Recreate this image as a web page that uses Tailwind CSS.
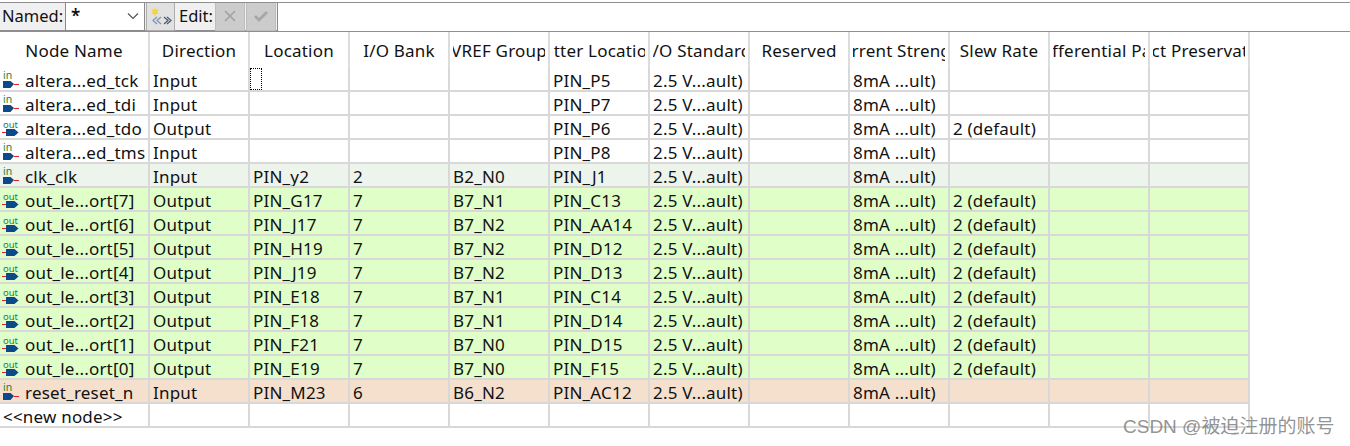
<!DOCTYPE html>
<html lang="en">
<head>
    <meta charset="UTF-8">
    <title>Pin Planner</title>
    <script src="https://cdn.jsdelivr.net/npm/@tailwindcss/browser@4"></script>
</head>
<body class="bg-white h-[446px] w-[1350px] overflow-hidden relative font-['Noto_Sans',sans-serif] text-[17px] tracking-[0.2px] text-[#111]">
    <!-- toolbar -->
    <div class="h-[32px] bg-[#f0f0f0] border-t-[2px] border-t-[#fff] border-b-[2px] border-b-[#8e8e93] flex items-center relative">
        <div class="absolute left-0 right-0 top-0 h-[1px] bg-[#8e8e93]"></div>
        <span class="ml-[2px] w-[63px] tracking-normal text-[16.5px]">Named:</span>
        <div class="w-[80px] h-[29px] bg-white border border-[#8a8a8a] flex items-center justify-between pl-[5px] pr-[5px]">
            <span class="font-semibold">*</span>
            <svg width="12" height="8" viewBox="0 0 12 8"><path d="M1 1.5 L6 6.5 L11 1.5" fill="none" stroke="#555" stroke-width="1.2"/></svg>
        </div>
        <div class="ml-[1px] w-[29px] h-[29px] bg-[#e1e1e1] border border-[#adadad] flex items-center justify-center">
            <svg width="22" height="20" viewBox="0 0 22 20">
                <path d="M5 1 L6 4 L9 3 L7 6 L9 8 L6 8 L5 11 L4 8 L1 8 L3 6 L1 3 L4 4 Z" fill="#f5d33c"/>
                <path d="M7 11 L3 14.5 L7 18 M11 11 L7 14.5 L11 18" fill="none" stroke="#7a93b5" stroke-width="1.2"/>
                <path d="M14 11 L18 14.5 L14 18 M17 11 L21 14.5 L17 18" fill="none" stroke="#4a5a70" stroke-width="1.2"/>
            </svg>
        </div>
        <span class="ml-[4px] w-[36px] tracking-normal text-[16.5px]">Edit:</span>
        <div class="w-[30px] h-[29px] bg-[#cccccc] border border-[#bdbdbd] flex items-center justify-center">
            <svg width="14" height="14" viewBox="0 0 14 14"><path d="M2 2 L12 12 M12 2 L2 12" stroke="#a0a0a0" stroke-width="1.5"/></svg>
        </div>
        <div class="ml-[1px] w-[30px] h-[29px] bg-[#cccccc] border border-[#bdbdbd] flex items-center justify-center">
            <svg width="16" height="14" viewBox="0 0 16 14"><path d="M2 7 L6 11 L14 3" fill="none" stroke="#a8a8a8" stroke-width="3"/></svg>
        </div>
        <div class="ml-[1px] flex-1 h-[29px] bg-white border-l border-[#8a8a8a]"></div>
    </div>

    <!-- table -->
    <div id="table" class="w-[1250px]"></div>

    <!-- watermark -->
    <div class="absolute left-[1123px] top-[415px] text-[19px] tracking-normal leading-[24px] text-[#777]/80 whitespace-nowrap font-['Liberation_Sans','Noto_Sans_CJK_SC',sans-serif]">CSDN @被迫注册的账号</div>

    <script>
        const headers = ['Node Name', 'Direction', 'Location', 'I/O Bank', 'VREF Group', 'Fitter Location', 'I/O Standard', 'Reserved', 'Current Strength', 'Slew Rate', 'Differential Pair', 'Strict Preservation'];
        const S = '2.5 V...ault)', C = '8mA ...ult)', D = '2 (default)';
        const rows = [
            ['in', 'altera...ed_tck', 'Input', '', '', '', 'PIN_P5', S, '', C, '', '', '', ''],
            ['in', 'altera...ed_tdi', 'Input', '', '', '', 'PIN_P7', S, '', C, '', '', '', ''],
            ['out', 'altera...ed_tdo', 'Output', '', '', '', 'PIN_P6', S, '', C, D, '', '', ''],
            ['in', 'altera...ed_tms', 'Input', '', '', '', 'PIN_P8', S, '', C, '', '', '', ''],
            ['in', 'clk_clk', 'Input', 'PIN_y2', '2', 'B2_N0', 'PIN_J1', S, '', C, '', '', '', 'clk'],
            ['out', 'out_le...ort[7]', 'Output', 'PIN_G17', '7', 'B7_N1', 'PIN_C13', S, '', C, D, '', '', 'out'],
            ['out', 'out_le...ort[6]', 'Output', 'PIN_J17', '7', 'B7_N2', 'PIN_AA14', S, '', C, D, '', '', 'out'],
            ['out', 'out_le...ort[5]', 'Output', 'PIN_H19', '7', 'B7_N2', 'PIN_D12', S, '', C, D, '', '', 'out'],
            ['out', 'out_le...ort[4]', 'Output', 'PIN_J19', '7', 'B7_N2', 'PIN_D13', S, '', C, D, '', '', 'out'],
            ['out', 'out_le...ort[3]', 'Output', 'PIN_E18', '7', 'B7_N1', 'PIN_C14', S, '', C, D, '', '', 'out'],
            ['out', 'out_le...ort[2]', 'Output', 'PIN_F18', '7', 'B7_N1', 'PIN_D14', S, '', C, D, '', '', 'out'],
            ['out', 'out_le...ort[1]', 'Output', 'PIN_F21', '7', 'B7_N0', 'PIN_D15', S, '', C, D, '', '', 'out'],
            ['out', 'out_le...ort[0]', 'Output', 'PIN_E19', '7', 'B7_N0', 'PIN_F15', S, '', C, D, '', '', 'out'],
            ['in', 'reset_reset_n', 'Input', 'PIN_M23', '6', 'B6_N2', 'PIN_AC12', S, '', C, '', '', '', 'reset']
        ];
        const rowBg = { clk: 'bg-[#ecf4ec]', out: 'bg-[#e0ffc8]', reset: 'bg-[#f5e0cd]' };

        const inIcon = `<svg class="shrink-0 ml-[3px] mt-[3px]" width="17" height="18" viewBox="0 0 17 18"><text x="0" y="8" font-size="10.5" letter-spacing="0" fill="#2f7d32" font-family="Noto Sans">in</text><path d="M0 10 H7.5 L11 13 L7.5 17 H0 Z" fill="#0b4a8a"/><path d="M11 13.5 H16" stroke="#e02020" stroke-width="1"/></svg>`;
        const outIcon = `<svg class="shrink-0 ml-[2px] mt-[3px]" width="18" height="18" viewBox="0 0 18 18"><text x="1" y="8.5" font-size="9.5" letter-spacing="0" fill="#2f7d32" font-family="Noto Sans">out</text><path d="M0 13.5 H5" stroke="#e02020" stroke-width="1"/><path d="M4 10 H12.5 L16.5 13.5 L12.5 17 H4 Z" fill="#0b4a8a"/></svg>`;

        const table = document.getElementById('table');
        const widths = i => i === 0 ? 'w-[150px]' : 'w-[100px]';

        let html = '<div class="flex h-[36px]">';
        headers.forEach((h, i) => {
            html += `<div class="${widths(i)} shrink-0 border-r-[2px] border-[#dcdcdc] h-full flex justify-center items-center px-[3px] pt-[2px]"><div class="w-full overflow-hidden flex justify-center whitespace-nowrap"><span class="shrink-0">${h}</span></div></div>`;
        });
        html += '</div>';

        rows.forEach((r, ri) => {
            const bg = rowBg[r[13]] || 'bg-white';
            html += `<div class="flex h-[24px] border-b-[2px] border-[#d8d8d8] ${bg}">`;
            html += `<div class="w-[150px] shrink-0 border-r-[2px] border-[#d8d8d8] h-full flex items-start overflow-hidden">${r[0] === 'in' ? inIcon : outIcon}<span class="absolute left-[25px] leading-[25px] whitespace-nowrap">${r[1]}</span></div>`;
            for (let c = 2; c < 13; c++) {
                const focus = ri === 0 && c === 3;
                html += `<div class="w-[100px] shrink-0 border-r-[2px] border-[#d8d8d8] h-full pl-[3px] leading-[25px] whitespace-nowrap overflow-hidden relative">${r[c]}${focus ? '<div class="absolute left-0 top-0 w-[12px] h-full border border-dotted border-black"></div>' : ''}</div>`;
            }
            html += '</div>';
        });

        html += '<div class="flex h-[24px] border-b-[2px] border-[#d8d8d8] bg-white">';
        html += '<div class="w-[150px] shrink-0 border-r-[2px] border-[#d8d8d8] h-full pl-[3px] leading-[25px] whitespace-nowrap">&lt;&lt;new node&gt;&gt;</div>';
        for (let c = 2; c < 13; c++) html += '<div class="w-[100px] shrink-0 border-r-[2px] border-[#d8d8d8] h-full"></div>';
        html += '</div>';

        table.innerHTML = html;
    </script>
</body>
</html>
